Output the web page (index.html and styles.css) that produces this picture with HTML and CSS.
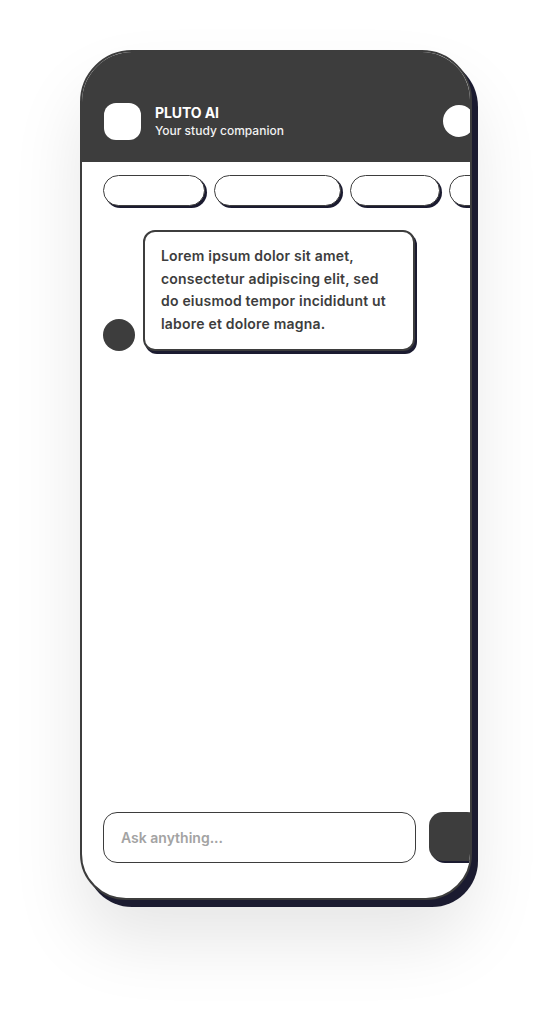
FILE: index.html
```html
<!DOCTYPE html>
<html lang="en">
<head>
<meta charset="utf-8">
<title>Pluto AI</title>
<link rel="stylesheet" href="styles.css">
</head>
<body>
<div class="stage">
  <div class="phone">
    <header class="top">
      <div class="logo"></div>
      <div class="titles">
        <div class="title">PLUTO AI</div>
        <div class="subtitle">Your study companion</div>
      </div>
      <div class="menu-dot"></div>
    </header>
    <div class="chips">
      <div class="chip chip-a"></div>
      <div class="chip chip-b"></div>
      <div class="chip chip-c"></div>
      <div class="chip chip-d"></div>
    </div>
    <main class="chat">
      <div class="msg">
        <div class="avatar"></div>
        <div class="bubble">Lorem ipsum dolor sit amet, consectetur adipiscing elit, sed do eiusmod tempor incididunt ut labore et dolore magna.</div>
      </div>
    </main>
    <footer class="composer">
      <div class="input">Ask anything...</div>
      <div class="send"></div>
    </footer>
  </div>
</div>
</body>
</html>
```

FILE: styles.css
```css
* { box-sizing: border-box; }
html, body { margin: 0; padding: 0; background: #ffffff; }
body { font-family: "Inter", "DejaVu Sans", sans-serif; }

.stage {
  width: 553px;
  height: 1012px;
  padding: 50px 0 0 80px;
}

.phone {
  width: 392px;
  height: 850px;
  border: 2px solid #3d3d3d;
  border-radius: 52px 50px 46px 46px;
  background: #ffffff;
  overflow: hidden;
  display: flex;
  flex-direction: column;
  box-shadow: 6px 7px 0 #1b1b30, 0 40px 70px rgba(0, 0, 0, 0.10);
}

.top {
  flex: 0 0 110px;
  background: #3d3d3d;
  display: flex;
  align-items: center;
  padding: 49px 0 21px 22px;
}

.logo {
  width: 37px;
  height: 37px;
  border-radius: 12px;
  background: #ffffff;
  flex-shrink: 0;
}

.titles { margin-left: 14px; color: #ffffff; }
.title { font-size: 14px; font-weight: 700; line-height: 18px; letter-spacing: -0.1px; }
.subtitle { font-size: 12px; font-weight: 500; line-height: 17px; color: #f2f2f2; }

.menu-dot {
  width: 32px;
  height: 32px;
  border-radius: 50%;
  background: #ffffff;
  margin-left: auto;
  margin-right: -5px;
  flex-shrink: 0;
}

.chips {
  display: flex;
  gap: 9px;
  padding: 13px 0 0 21px;
}

.chip {
  flex-shrink: 0;
  height: 31px;
  border: 1.5px solid #3d3d3d;
  border-radius: 16px;
  background: #ffffff;
  box-shadow: 2px 2px 0 #1b1b30;
}
.chip-a { width: 102px; }
.chip-b { width: 127px; }
.chip-c { width: 90px; }
.chip-d { width: 60px; }

.chat {
  flex: 1;
  padding: 24px 0 0 21px;
}

.msg {
  display: flex;
  align-items: flex-end;
  gap: 8px;
}

.avatar {
  width: 32px;
  height: 32px;
  border-radius: 50%;
  background: #3d3d3d;
  flex-shrink: 0;
}

.bubble {
  width: 272px;
  border: 2px solid #3d3d3d;
  border-radius: 12px;
  background: #ffffff;
  box-shadow: 2px 3px 0 #1b1b30;
  padding: 13px 18px 14px 16px;
  color: #3d3d3d;
  font-size: 14px;
  font-weight: 600;
  letter-spacing: 0.2px;
  line-height: 22.5px;
}

.composer {
  display: flex;
  gap: 13px;
  padding: 0 0 35px 21px;
}

.input {
  flex: 0 0 313px;
  height: 51px;
  border: 1.5px solid #3d3d3d;
  border-radius: 14px;
  display: flex;
  align-items: center;
  padding-left: 17px;
  color: #a3a3a3;
  font-size: 14px;
  font-weight: 600;
}

.send {
  flex: 0 0 52px;
  height: 49px;
  border-radius: 14px;
  background: #3d3d3d;
  box-shadow: 2px 2px 0 #1b1b30;
}
```
